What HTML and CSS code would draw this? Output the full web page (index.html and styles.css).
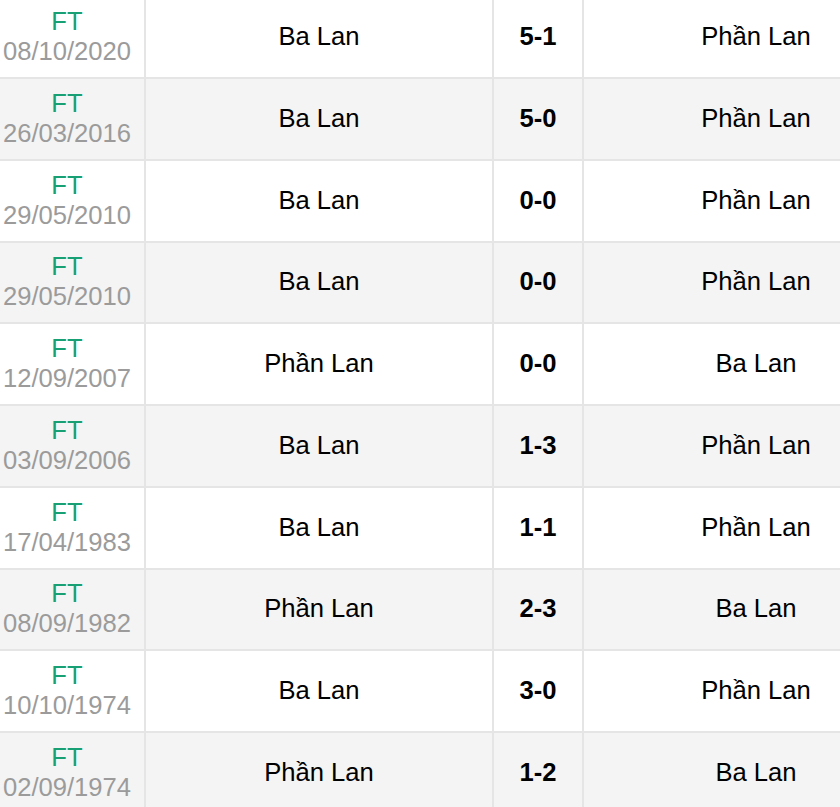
FILE: index.html
```html
<!DOCTYPE html>
<html lang="vi">
<head>
<meta charset="utf-8">
<title>Lịch sử đối đầu</title>
<link rel="stylesheet" href="styles.css">
</head>
<body>
<div class="viewport">
  <div class="table">
    <div class="row"><div class="cell c1"><span class="st">FT</span><span class="dt">08/10/2020</span></div><div class="cell c2">Ba Lan</div><div class="cell c3">5-1</div><div class="cell c4">Phần Lan</div></div>
    <div class="row alt"><div class="cell c1"><span class="st">FT</span><span class="dt">26/03/2016</span></div><div class="cell c2">Ba Lan</div><div class="cell c3">5-0</div><div class="cell c4">Phần Lan</div></div>
    <div class="row"><div class="cell c1"><span class="st">FT</span><span class="dt">29/05/2010</span></div><div class="cell c2">Ba Lan</div><div class="cell c3">0-0</div><div class="cell c4">Phần Lan</div></div>
    <div class="row alt"><div class="cell c1"><span class="st">FT</span><span class="dt">29/05/2010</span></div><div class="cell c2">Ba Lan</div><div class="cell c3">0-0</div><div class="cell c4">Phần Lan</div></div>
    <div class="row"><div class="cell c1"><span class="st">FT</span><span class="dt">12/09/2007</span></div><div class="cell c2">Phần Lan</div><div class="cell c3">0-0</div><div class="cell c4">Ba Lan</div></div>
    <div class="row alt"><div class="cell c1"><span class="st">FT</span><span class="dt">03/09/2006</span></div><div class="cell c2">Ba Lan</div><div class="cell c3">1-3</div><div class="cell c4">Phần Lan</div></div>
    <div class="row"><div class="cell c1"><span class="st">FT</span><span class="dt">17/04/1983</span></div><div class="cell c2">Ba Lan</div><div class="cell c3">1-1</div><div class="cell c4">Phần Lan</div></div>
    <div class="row alt"><div class="cell c1"><span class="st">FT</span><span class="dt">08/09/1982</span></div><div class="cell c2">Phần Lan</div><div class="cell c3">2-3</div><div class="cell c4">Ba Lan</div></div>
    <div class="row"><div class="cell c1"><span class="st">FT</span><span class="dt">10/10/1974</span></div><div class="cell c2">Ba Lan</div><div class="cell c3">3-0</div><div class="cell c4">Phần Lan</div></div>
    <div class="row alt"><div class="cell c1"><span class="st">FT</span><span class="dt">02/09/1974</span></div><div class="cell c2">Phần Lan</div><div class="cell c3">1-2</div><div class="cell c4">Ba Lan</div></div>
  </div>
</div>
</body>
</html>
```
FILE: styles.css
```css
html, body {
  margin: 0;
  padding: 0;
  background: #ffffff;
}
body {
  font-family: "Liberation Sans", Arial, sans-serif;
  font-size: 25.6px;
  color: #000000;
  overflow: hidden;
}
.viewport {
  width: 840px;
  height: 807px;
  overflow: hidden;
}
.table {
  width: 938px;
  margin-left: -10px;
  margin-top: -2.75px;
}
.row {
  display: grid;
  grid-template-columns: 156px 348px 90px 344px;
  height: 81.75px;
  box-sizing: border-box;
  border-bottom: 2px solid #e5e5e5;
  background: #ffffff;
}
.row.alt {
  background: #f4f4f4;
}
.cell {
  display: flex;
  flex-direction: column;
  align-items: center;
  justify-content: center;
  text-align: center;
  line-height: 30px;
  white-space: nowrap;
  padding-bottom: 2px;
}
.c1, .c2, .c3 {
  border-right: 2px solid #e5e5e5;
}
.c3 {
  font-weight: bold;
}
.st {
  color: #16a074;
}
.dt {
  color: #9b9b9b;
}
```
